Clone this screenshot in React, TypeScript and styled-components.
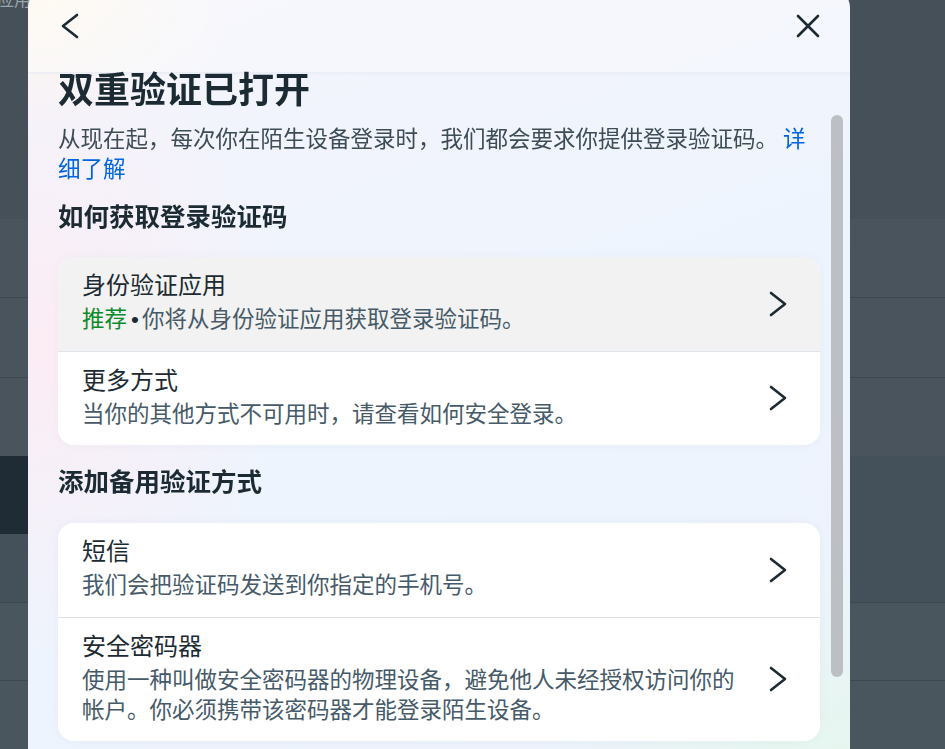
import React from "react";
import styled, { createGlobalStyle } from "styled-components";

const GlobalStyle = createGlobalStyle`
  html, body {
    margin: 0;
    padding: 0;
    height: 100%;
    overflow: hidden;
  }
  body {
    background: #465058;
    font-family: "Noto Sans CJK SC", "Noto Sans", sans-serif;
  }
`;

// ---- page behind the dialog ----

const Backdrop = styled.div`
  display: flex;
  flex-direction: column;
  height: 100vh;
  overflow: hidden;
`;

const BgRow = styled.div<{ $h: number; $bg: string; $line?: boolean }>`
  height: ${p => p.$h}px;
  flex-shrink: 0;
  box-sizing: border-box;
  background: ${p => p.$bg};
  border-top: ${p => (p.$line ? "1px solid #3e4850" : "none")};
  display: flex;
  align-items: flex-start;
`;

const BgBlock = styled.div`
  width: 60px;
  height: 78px;
  background: #1f2c35;
`;

const BgText = styled.div`
  margin-top: -12px;
  margin-left: -3px;
  font-size: 17px;
  line-height: 22px;
  color: #9aa3aa;
`;

// ---- dialog ----

const Modal = styled.div`
  position: fixed;
  top: -12px;
  left: 28px;
  width: 822px;
  height: 800px;
  border-radius: 20px;
  overflow: hidden;
  display: flex;
  flex-direction: column;
  background:
    radial-gradient(ellipse 55% 45% at 100% 100%, rgba(228, 247, 236, 0.95), rgba(228, 247, 236, 0) 70%),
    radial-gradient(ellipse 45% 55% at 0% 45%, rgba(252, 236, 244, 1), rgba(252, 236, 244, 0) 70%),
    radial-gradient(ellipse 35% 25% at 0% 0%, rgba(255, 248, 236, 1), rgba(255, 248, 236, 0) 75%),
    linear-gradient(160deg, #f5f4fc 0%, #eef4fd 45%, #edf2fc 100%);
`;

const Header = styled.div`
  height: 85px;
  flex-shrink: 0;
  box-sizing: border-box;
  display: flex;
  justify-content: space-between;
  align-items: flex-start;
  padding: 24px 28px 0 32px;
  background: rgba(255, 255, 255, 0.3);
  border-bottom: 1px solid rgba(226, 232, 242, 0.7);
  box-shadow: 0 1px 3px rgba(30, 50, 80, 0.03);
`;

const IconButton = styled.button`
  border: 0;
  padding: 0;
  background: none;
  display: flex;
  cursor: pointer;
`;

const Body = styled.div`
  flex: 1;
  min-height: 0;
  display: flex;
`;

const Content = styled.div`
  flex: 1;
  padding-left: 30px;
  display: flex;
  flex-direction: column;
`;

const ScrollCol = styled.div`
  width: 30px;
  flex-shrink: 0;
`;

const Thumb = styled.div`
  margin: 42px 0 0 11px;
  width: 12px;
  height: 562px;
  border-radius: 6px;
  background: #bcc0c4;
`;

const Title = styled.h1`
  margin: -3px 0 0;
  font-size: 36px;
  line-height: 34px;
  font-weight: 700;
  color: #1c2b33;
`;

const Description = styled.p`
  margin: 18px 0 0;
  font-size: 22.5px;
  line-height: 30px;
  color: #3e4c56;
`;

const Link = styled.a`
  color: #0064e0;
  text-decoration: none;
`;

const SectionHeading = styled.h2<{ $gap: number }>`
  margin: ${p => p.$gap}px 0 0;
  font-size: 25.5px;
  line-height: 32px;
  font-weight: 700;
  color: #1c2b33;
`;

const Card = styled.div<{ $top: number }>`
  margin-top: ${p => p.$top}px;
  background: #ffffff;
  border-radius: 16px;
  overflow: hidden;
  box-shadow: 0 0 10px rgba(40, 70, 120, 0.04);
`;

const Row = styled.div<{ $hover?: boolean }>`
  display: flex;
  align-items: center;
  gap: 20px;
  padding: 12px 32px 18.5px 24px;
  background: ${p => (p.$hover ? "#f2f2f2" : "#ffffff")};
  & + & {
    border-top: 1px solid #dfe4ea;
  }
`;

const RowText = styled.div`
  flex: 1;
  min-width: 0;
`;

const RowTitle = styled.div`
  font-size: 24px;
  line-height: 30px;
  color: #1c2b33;
`;

const RowSub = styled.div`
  margin-top: 3px;
  font-size: 22.5px;
  line-height: 30px;
  color: #465a69;
`;

const Recommended = styled.span`
  color: #0b8a2a;
`;

const Dot = styled.span`
  font-family: "Liberation Sans", sans-serif;
  line-height: 0;
  margin: 0 3px 0 4px;
  color: #1c2b33;
`;

const ChevronWrap = styled.span`
  display: flex;
  margin-top: 6px;
`;

const ChevronRight = () => (
  <ChevronWrap>
    <svg width="20" height="28" viewBox="0 0 20 28" fill="none">
      <polyline
        points="3,3 17,14 3,25"
        stroke="#1c2b33"
        strokeWidth="2.6"
        strokeLinecap="round"
        strokeLinejoin="round"
      />
    </svg>
  </ChevronWrap>
);

const ChevronLeft = () => (
  <svg width="20" height="28" viewBox="0 0 20 28" fill="none">
    <polyline
      points="17,3 3,14 17,25"
      stroke="#1c2b33"
      strokeWidth="2.6"
      strokeLinecap="round"
      strokeLinejoin="round"
    />
  </svg>
);

const CloseIcon = () => (
  <svg width="28" height="28" viewBox="0 0 28 28" fill="none">
    <path
      d="M4 4 L24 24 M24 4 L4 24"
      stroke="#1c2b33"
      strokeWidth="2.6"
      strokeLinecap="round"
    />
  </svg>
);

type Method = {
  title: string;
  sub: React.ReactNode;
  hover?: boolean;
};

const codeMethods: Method[] = [
  {
    title: "身份验证应用",
    sub: (
      <>
        <Recommended>推荐</Recommended>
        <Dot>•</Dot>你将从身份验证应用获取登录验证码。
      </>
    ),
    hover: true,
  },
  {
    title: "更多方式",
    sub: "当你的其他方式不可用时，请查看如何安全登录。",
  },
];

const backupMethods: Method[] = [
  {
    title: "短信",
    sub: "我们会把验证码发送到你指定的手机号。",
  },
  {
    title: "安全密码器",
    sub: "使用一种叫做安全密码器的物理设备，避免他人未经授权访问你的帐户。你必须携带该密码器才能登录陌生设备。",
  },
];

const MethodList: React.FC<{ items: Method[]; top: number }> = ({
  items,
  top,
}) => (
  <Card $top={top}>
    {items.map(item => (
      <Row key={item.title} $hover={item.hover}>
        <RowText>
          <RowTitle>{item.title}</RowTitle>
          <RowSub>{item.sub}</RowSub>
        </RowText>
        <ChevronRight />
      </Row>
    ))}
  </Card>
);

export default function App() {
  return (
    <>
      <GlobalStyle />
      <Backdrop>
        <BgRow $h={219} $bg="#465058">
          <BgText>应用</BgText>
        </BgRow>
        <BgRow $h={78} $bg="#49545c" />
        <BgRow $h={80} $bg="#49545c" $line />
        <BgRow $h={79} $bg="#49545c" $line />
        <BgRow $h={146} $bg="#44515a">
          <BgBlock />
        </BgRow>
        <BgRow $h={78} $bg="#4a565e" $line />
        <BgRow $h={80} $bg="#4a565e" $line />
      </Backdrop>

      <Modal>
        <Header>
          <IconButton aria-label="返回">
            <ChevronLeft />
          </IconButton>
          <IconButton aria-label="关闭">
            <CloseIcon />
          </IconButton>
        </Header>
        <Body>
          <Content>
            <Title>双重验证已打开</Title>
            <Description>
              从现在起，每次你在陌生设备登录时，我们都会要求你提供登录验证码。{" "}
              <Link href="#">详细了解</Link>
            </Description>

            <SectionHeading $gap={17}>如何获取登录验证码</SectionHeading>
            <MethodList items={codeMethods} top={26} />

            <SectionHeading $gap={19}>添加备用验证方式</SectionHeading>
            <MethodList items={backupMethods} top={27} />
          </Content>
          <ScrollCol>
            <Thumb />
          </ScrollCol>
        </Body>
      </Modal>
    </>
  );
}
